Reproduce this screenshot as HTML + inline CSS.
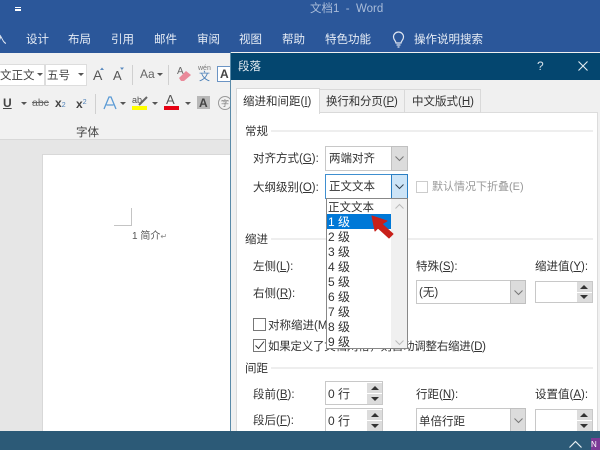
<!DOCTYPE html>
<html><head><meta charset="utf-8">
<style>
html,body{margin:0;padding:0;background:#e6e6e6}
#r{position:relative;width:600px;height:450px;overflow:hidden;font-family:"Liberation Sans","Noto Sans CJK SC",sans-serif;font-size:11.5px;color:#333;filter:blur(.35px)}
#r div,#r span.a{position:absolute;box-sizing:border-box}
.t{white-space:nowrap;line-height:14px;margin-top:1px}
.w{color:#e6ecf5;font-size:11.5px;top:32px}
.b{background:#fff;border:1px solid #c8c8c8}
.dd{background:#dcdcdc;border:1px solid #c0c0c0}
u{text-decoration:underline}
svg{position:absolute;overflow:visible}
</style></head><body>
<div id="r">
<div style="left:0;top:0;width:600px;height:53px;background:#2b579a"></div>
<div class="t" style="left:310px;top:1px;color:#a9bcd9;font-size:11.5px">文档1 &nbsp;-&nbsp; Word</div>
<div style="left:15px;top:7px;width:6px;height:1px;background:#fff"></div>
<div style="left:15px;top:9px;width:6px;height:2px;background:#fff"></div>
<div class="t w" style="left:-5px">入</div>
<div class="t w" style="left:26px">设计</div>
<div class="t w" style="left:68px">布局</div>
<div class="t w" style="left:111px">引用</div>
<div class="t w" style="left:154px">邮件</div>
<div class="t w" style="left:197px">审阅</div>
<div class="t w" style="left:239px">视图</div>
<div class="t w" style="left:282px">帮助</div>
<div class="t w" style="left:325px">特色功能</div>
<div class="t w" style="left:414px">操作说明搜索</div>
<svg style="left:391px;top:31px" width="16" height="18" fill="none" stroke="#dfe6f1" stroke-width="1.2"><path d="M5 12c0-2-2.500-3-2.500-6a5 5 0 0 1 10 0c0 3-2.500 4-2.500 6zM5.500 14h4M6.500 16h2"/></svg>

<div style="left:0;top:53px;width:600px;height:87px;background:#f1f1f1;border-bottom:1px solid #d8d8d8"></div>
<div class="b" style="left:-2px;top:64px;width:47px;height:22px;border-color:#ddd"></div>
<div class="t" style="left:0;top:68px;color:#444">文正文</div>
<svg style="left:37px;top:73px" width="6" height="4"><path d="M0 0h6L3 3z" fill="#555"/></svg>
<div class="b" style="left:45px;top:64px;width:42px;height:22px;border-color:#ddd"></div>
<div class="t" style="left:47px;top:68px;color:#444">五号</div>
<svg style="left:78px;top:73px" width="6" height="4"><path d="M0 0h6L3 3z" fill="#555"/></svg>
<div class="t" style="left:93px;top:67px;color:#555;font-size:14px">A</div>
<div class="t" style="left:113px;top:68px;color:#555;font-size:13px">A</div>
<svg style="left:100px;top:67px" width="24" height="4"><path d="M0 3l2-2.500 2 2.500z" fill="#5b8bc0"/><path d="M20 .5h4l-2 2.500z" fill="#5b8bc0"/></svg>
<div style="left:132px;top:65px;width:1px;height:20px;background:#d0d0d0"></div>
<div class="t" style="left:140px;top:66px;color:#666;font-size:12px">Aa</div>
<svg style="left:157px;top:73px" width="6" height="4"><path d="M0 0h6L3 3z" fill="#555"/></svg>
<div style="left:168px;top:65px;width:1px;height:20px;background:#d0d0d0"></div>
<div class="t" style="left:177px;top:64px;color:#666;font-size:10px">A</div>
<svg style="left:178px;top:70px" width="14" height="12"><path d="M1 8l7-7 5 4-7 6H3z" fill="#ea8a9a"/></svg>
<div class="t" style="left:198px;top:61px;color:#777;font-size:7px">wén</div>
<div class="t" style="left:199px;top:69px;color:#4a7fb8;font-size:11px">文</div>
<div style="left:217px;top:66px;width:16px;height:16px;border:1px solid #6b94c4;background:#fff"></div>
<div class="t" style="left:220px;top:66px;color:#444;font-size:12px;font-weight:bold">A</div>

<div class="t" style="left:3px;top:95px;color:#444;font-size:12px;font-weight:bold;text-decoration:underline">U</div>
<svg style="left:21px;top:102px" width="6" height="4"><path d="M0 0h6L3 3z" fill="#555"/></svg>
<div class="t" style="left:32px;top:95px;color:#666;font-size:10.500px;text-decoration:line-through">abc</div>
<div class="t" style="left:55px;top:95px;color:#444;font-size:12px;font-weight:bold">x<span style="font-size:7px;color:#4a7fb8;font-weight:normal">2</span></div>
<div class="t" style="left:76px;top:95px;color:#444;font-size:12px;font-weight:bold">x<span style="font-size:7px;color:#4a7fb8;font-weight:normal;vertical-align:4px">2</span></div>
<div style="left:95px;top:94px;width:1px;height:20px;background:#d0d0d0"></div>
<svg style="left:103px;top:96px" width="14" height="14" fill="none" stroke="#5b9bd5" stroke-width="1.300"><path d="M1 13L6 1h2l5 12M3.500 9h7"/></svg>
<svg style="left:120px;top:102px" width="6" height="4"><path d="M0 0h6L3 3z" fill="#555"/></svg>
<div class="t" style="left:132px;top:92px;color:#555;font-size:9px">ab</div>
<svg style="left:138px;top:96px" width="10" height="10"><path d="M1 9L9 1" stroke="#666" stroke-width="2"/></svg>
<div style="left:132px;top:106px;width:15px;height:4px;background:#ffff00"></div>
<svg style="left:152px;top:102px" width="6" height="4"><path d="M0 0h6L3 3z" fill="#555"/></svg>
<div class="t" style="left:166px;top:92px;color:#555;font-size:13px">A</div>
<div style="left:164px;top:106px;width:15px;height:4px;background:#e60012"></div>
<svg style="left:185px;top:102px" width="6" height="4"><path d="M0 0h6L3 3z" fill="#555"/></svg>
<div style="left:197px;top:96px;width:13px;height:13px;background:#b8b8b8"></div>
<div class="t" style="left:199px;top:95px;color:#444;font-size:12px;font-weight:bold">A</div>
<div style="left:218px;top:96px;width:14px;height:14px;border:1px solid #999;border-radius:50%"></div>
<div class="t" style="left:221px;top:96px;color:#777;font-size:8px">字</div>
<div class="t" style="left:76px;top:125px;color:#444;font-size:11.500px">字体</div>

<div style="left:42px;top:154px;width:200px;height:290px;background:#fff;border:1px solid #d8d8d8"></div>
<div style="left:114px;top:208px;width:18px;height:18px;border-right:1px solid #c4c4c4;border-bottom:1px solid #c4c4c4"></div>
<div class="t" style="left:132px;top:229px;font-size:10px;color:#555">1 简介<span style="color:#888;font-size:8px">↵</span></div>

<div style="left:230px;top:52px;width:370px;height:380px;background:#f0f0f0;border-left:1px solid #5a8aa8"></div>
<div style="left:231px;top:53px;width:369px;height:27px;background:#04466f"></div>
<div class="t" style="left:238px;top:59px;color:#e4ecf2;font-size:11.500px">段落</div>
<div class="t" style="left:537px;top:58px;color:#d8e2ea;font-size:12px">?</div>
<svg style="left:578px;top:61px" width="11" height="11"><path d="M.5.500l9 9M9.500.500l-9 9" stroke="#e4ecf2" stroke-width="1.100"/></svg>

<div style="left:236px;top:112px;width:362px;height:320px;background:#fff;border-top:1px solid #dcdcdc;border-left:1px solid #dcdcdc;border-right:1px solid #dcdcdc"></div>
<div style="left:236px;top:88px;width:84px;height:26px;background:#fff;border:1px solid #d9d9d9;border-bottom:0"></div>
<div style="left:320px;top:89px;width:85px;height:24px;background:#f0f0f0;border:1px solid #d9d9d9;border-left:0"></div>
<div style="left:405px;top:89px;width:76px;height:24px;background:#f0f0f0;border:1px solid #d9d9d9;border-left:0"></div>
<div class="t" style="left:243px;top:94px">缩进和间距(<u>I</u>)</div>
<div class="t" style="left:326px;top:94px;letter-spacing:-.15px">换行和分页(<u>P</u>)</div>
<div class="t" style="left:412px;top:94px">中文版式(<u>H</u>)</div>

<div class="t" style="left:245px;top:124px">常规</div>
<div style="left:271px;top:130px;width:322px;height:2px;background:#eee"></div>
<div class="t" style="left:253px;top:151px">对齐方式(<u>G</u>):</div>
<div class="b" style="left:325px;top:146px;width:83px;height:25px"></div>
<div class="t" style="left:329px;top:151px">两端对齐</div>
<div class="dd" style="left:391px;top:146px;width:17px;height:25px"></div>
<svg style="left:395px;top:156px" width="9" height="5" fill="none" stroke="#777"><path d="M.5.500l4 4 4-4"/></svg>

<div class="t" style="left:253px;top:180px">大纲级别(<u>O</u>):</div>
<div class="b" style="left:325px;top:174px;width:83px;height:25px;border-color:#3f8fd0"></div>
<div class="t" style="left:329px;top:179px">正文文本</div>
<div style="left:391px;top:174px;width:17px;height:25px;background:#cce4f7;border:1px solid #2a7fc4"></div>
<svg style="left:395px;top:184px" width="9" height="5" fill="none" stroke="#345"><path d="M.5.500l4 4 4-4"/></svg>
<div style="left:416px;top:181px;width:12px;height:12px;border:1px solid #ccc;background:#fff"></div>
<div class="t" style="left:432px;top:179px;color:#999;font-size:11px">默认情况下折叠(E)</div>

<div class="t" style="left:245px;top:232px">缩进</div>
<div style="left:271px;top:238px;width:322px;height:2px;background:#eee"></div>
<div class="t" style="left:253px;top:259px">左侧(<u>L</u>):</div>
<div class="t" style="left:253px;top:286px">右侧(<u>R</u>):</div>
<div class="t" style="left:416px;top:259px">特殊(<u>S</u>):</div>
<div class="t" style="left:535px;top:259px">缩进值(<u>Y</u>):</div>
<div class="b" style="left:416px;top:280px;width:110px;height:24px"></div>
<div class="t" style="left:419px;top:285px">(无)</div>
<div class="dd" style="left:510px;top:280px;width:16px;height:24px"></div>
<svg style="left:514px;top:290px" width="9" height="5" fill="none" stroke="#777"><path d="M.5.500l4 4 4-4"/></svg>
<div class="b" style="left:535px;top:281px;width:58px;height:22px"></div>
<div class="dd" style="left:577px;top:282px;width:15px;height:10px;border:0"></div>
<div class="dd" style="left:577px;top:293px;width:15px;height:9px;border:0"></div>
<svg style="left:580px;top:285px" width="8" height="14"><path d="M0 4l4-4 4 4zM0 10h8l-4 4z" fill="#333"/></svg>

<div style="left:253px;top:318px;width:13px;height:13px;border:1px solid #777;background:#fff"></div>
<div class="t" style="left:268px;top:318px">对称缩进(M)</div>
<div style="left:253px;top:339px;width:13px;height:13px;border:1px solid #777;background:#fff"></div>
<svg style="left:255px;top:341px" width="10" height="9" fill="none" stroke="#333"><path d="M.5 4.500l3 3 5.500-7"/></svg>
<div class="t" style="left:268px;top:339px;letter-spacing:-.25px">如果定义了文档网格，则自动调整右缩进(<u>D</u>)</div>

<div class="t" style="left:245px;top:361px">间距</div>
<div style="left:271px;top:367px;width:322px;height:2px;background:#eee"></div>
<div class="t" style="left:253px;top:387px">段前(<u>B</u>):</div>
<div class="t" style="left:253px;top:413px">段后(<u>F</u>):</div>
<div class="b" style="left:325px;top:381px;width:58px;height:24px"></div>
<div class="t" style="left:328px;top:386px;font-size:12px">0 行</div>
<div class="dd" style="left:367px;top:383px;width:15px;height:10px;border:0"></div>
<div class="dd" style="left:367px;top:394px;width:15px;height:10px;border:0"></div>
<svg style="left:371px;top:386px" width="8" height="15"><path d="M0 4l4-4 4 4zM0 11h8l-4 4z" fill="#333"/></svg>
<div class="b" style="left:325px;top:408px;width:58px;height:30px"></div>
<div class="t" style="left:328px;top:413px;font-size:12px">0 行</div>
<div class="dd" style="left:367px;top:410px;width:15px;height:10px;border:0"></div>
<div class="dd" style="left:367px;top:421px;width:15px;height:10px;border:0"></div>
<svg style="left:371px;top:413px" width="8" height="15"><path d="M0 4l4-4 4 4zM0 11h8l-4 4z" fill="#333"/></svg>
<div class="t" style="left:416px;top:387px">行距(<u>N</u>):</div>
<div class="t" style="left:535px;top:387px">设置值(<u>A</u>):</div>
<div class="b" style="left:416px;top:408px;width:110px;height:30px"></div>
<div class="t" style="left:419px;top:414px">单倍行距</div>
<div class="dd" style="left:510px;top:408px;width:16px;height:30px"></div>
<svg style="left:514px;top:418px" width="9" height="5" fill="none" stroke="#777"><path d="M.5.500l4 4 4-4"/></svg>
<div class="b" style="left:535px;top:409px;width:58px;height:28px"></div>
<div class="dd" style="left:577px;top:410px;width:15px;height:10px;border:0"></div>
<div class="dd" style="left:577px;top:421px;width:15px;height:10px;border:0"></div>
<svg style="left:580px;top:413px" width="8" height="15"><path d="M0 4l4-4 4 4zM0 11h8l-4 4z" fill="#333"/></svg>

<div style="left:326px;top:198px;width:82px;height:151px;background:#fff;border:1px solid #888"></div>
<div style="left:391px;top:199px;width:16px;height:149px;background:#f0f0f0"></div>
<svg style="left:395px;top:204px" width="9" height="5" fill="none" stroke="#bbb"><path d="M.5 4.500l4-4 4 4"/></svg>
<svg style="left:395px;top:340px" width="9" height="5" fill="none" stroke="#bbb"><path d="M.5.500l4 4 4-4"/></svg>
<div style="left:327px;top:214px;width:64px;height:15px;background:#0078d7"></div>
<div class="t" style="left:328px;top:200px">正文文本</div>
<div class="t" style="left:328px;top:214px;color:#fff;font-size:12px">1 级</div>
<div class="t" style="left:328px;top:229px;font-size:12px">2 级</div>
<div class="t" style="left:328px;top:244px;font-size:12px">3 级</div>
<div class="t" style="left:328px;top:259px;font-size:12px">4 级</div>
<div class="t" style="left:328px;top:274px;font-size:12px">5 级</div>
<div class="t" style="left:328px;top:289px;font-size:12px">6 级</div>
<div class="t" style="left:328px;top:304px;font-size:12px">7 级</div>
<div class="t" style="left:328px;top:319px;font-size:12px">8 级</div>
<div class="t" style="left:328px;top:334px;font-size:12px">9 级</div>
<svg style="left:368px;top:212px" width="30" height="30"><path d="M4 4L19 9 14 12 25 22 21 26 10 16 7 19z" fill="#c8201a" stroke="#c8201a" stroke-linejoin="round"/></svg>

<div style="left:0;top:431px;width:600px;height:19px;background:#2c5a77"></div>
<svg style="left:569px;top:441px" width="13" height="7" fill="none" stroke="#e8eef2" stroke-width="1.200"><path d="M.5 6.500l6-6 6 6"/></svg>
<div style="left:591px;top:438px;width:9px;height:12px;background:#7c3a96"></div>
<div class="t" style="left:591px;top:437px;color:#fff;font-size:8px">N</div>
</div>
</body></html>
